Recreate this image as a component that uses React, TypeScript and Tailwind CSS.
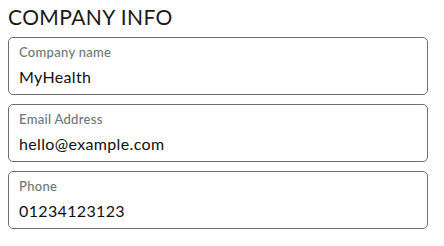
const fields = [
  { label: 'Company name', value: 'MyHealth' },
  { label: 'Email Address', value: 'hello@example.com' },
  { label: 'Phone', value: '01234123123' },
];

export default function App() {
  return (
    <div className="w-[444px] h-[246px] bg-white px-2 pt-[3px] font-['Lato',sans-serif]">
      <h2 className="text-[21px] leading-[28px] text-[#1a1a1a] tracking-[0.4px]">COMPANY INFO</h2>
      <div className="mt-[6px] flex w-[420px] flex-col gap-[9px]">
        {fields.map((f) => (
          <div key={f.label} className="h-[58px] rounded-[5px] border border-[#6f6f6f] px-[10px] pt-[5px]">
            <div className="text-[13px] leading-[18px] font-medium tracking-[0.3px] text-[#6b7878]">{f.label}</div>
            <div className="mt-[5px] text-[16px] leading-[22px] tracking-[0.35px] text-[#111]">{f.value}</div>
          </div>
        ))}
      </div>
    </div>
  );
}
